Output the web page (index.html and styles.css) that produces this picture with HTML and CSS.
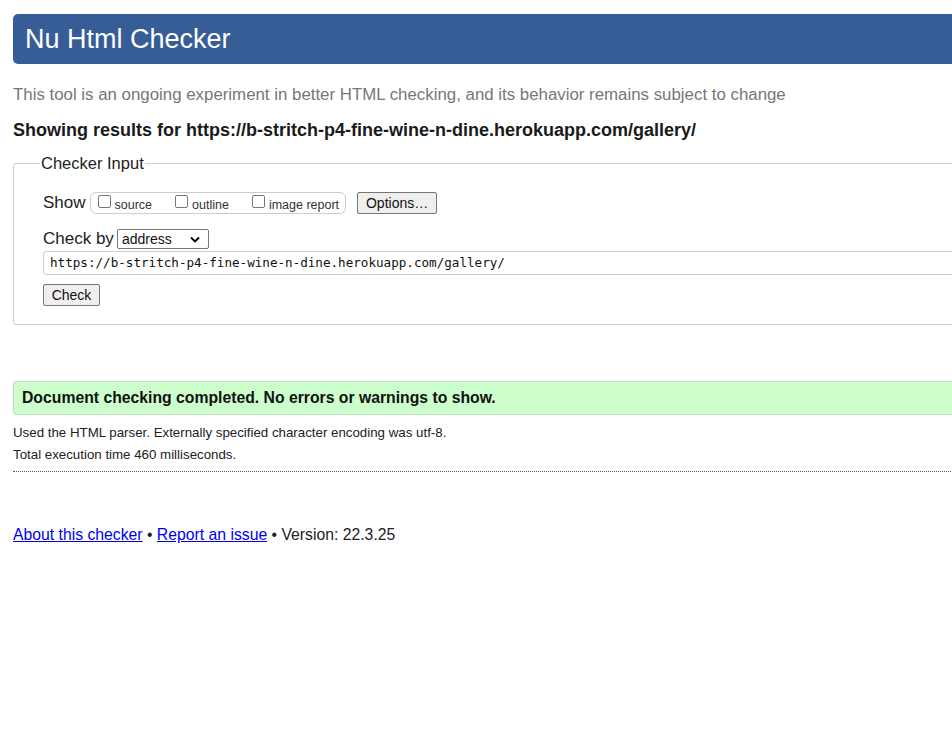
FILE: index.html
```html
<!DOCTYPE html>
<html>
<head>
<meta charset="utf-8">
<title>Nu Html Checker</title>
<link rel="stylesheet" href="styles.css">
</head>
<body>
<div class="page">
  <h1 class="title">Nu Html Checker</h1>
  <p class="tagline">This tool is an ongoing experiment in better HTML checking, and its behavior remains subject to change</p>
  <p class="showing">Showing results for https://b-stritch-p4-fine-wine-n-dine.herokuapp.com/gallery/</p>
  <fieldset class="input-box">
    <legend class="legend">Checker Input</legend>
    <div class="row show-row">
      <span class="lbl">Show</span>
      <span class="opts">
        <label class="opt"><span class="cb"></span>source</label>
        <label class="opt"><span class="cb"></span>outline</label>
        <label class="opt"><span class="cb"></span>image report</label>
      </span>
      <span class="btn options-btn">Options…</span>
    </div>
    <div class="row by-row">
      <span class="lbl">Check by</span>
      <span class="select">address<svg class="chev" width="10" height="7" viewBox="0 0 10 7"><path d="M1 1.5 L5 5.5 L9 1.5" fill="none" stroke="#000" stroke-width="1.8"/></svg></span>
    </div>
    <div class="url">https://b-stritch-p4-fine-wine-n-dine.herokuapp.com/gallery/</div>
    <span class="btn check-btn">Check</span>
  </fieldset>
  <div class="success">Document checking completed. No errors or warnings to show.</div>
  <p class="details">Used the HTML parser. Externally specified character encoding was utf-8.</p>
  <p class="details">Total execution time 460 milliseconds.</p>
  <div class="rule"></div>
  <p class="footer"><a href="#">About this checker</a> • <a href="#">Report an issue</a> • Version: 22.3.25</p>
</div>
</body>
</html>
```
FILE: styles.css
```css
html { overflow: hidden; }
body {
  margin: 0;
  background: #fff;
  font-family: "Liberation Sans", Arial, sans-serif;
  color: #222;
}
.page {
  width: 1100px;
  padding: 14px 0 0 13px;
}
.title {
  margin: 0;
  height: 50px;
  box-sizing: border-box;
  background: #365d95;
  color: #fff;
  border-radius: 5px 0 0 5px;
  font-weight: normal;
  font-size: 27px;
  line-height: 50px;
  padding-left: 12px;
}
.tagline {
  margin: 20px 0 0;
  color: #777;
  font-size: 16.85px;
  line-height: 22px;
}
.showing {
  margin: 13px 0 0;
  font-weight: bold;
  font-size: 18px;
  line-height: 22px;
  color: #1a1a1a;
}
.input-box {
  margin: 13px 0 0;
  border: 1px solid #ccc;
  border-right: none;
  border-radius: 4px 0 0 4px;
  padding: 4px 0 18px 29px;
  min-width: 0;
}
.legend {
  font-size: 16.5px;
  padding: 0 1px;
  margin-left: -3px;
  color: #222;
}
.row {
  display: flex;
  align-items: center;
}
.show-row {
  margin-top: 15px;
  height: 22px;
}
.lbl {
  font-size: 17px;
  color: #222;
  white-space: nowrap;
}
.opts {
  display: flex;
  align-items: center;
  flex-shrink: 0;
  margin-left: 4px;
  height: 20px;
  border: 1px solid #ccc;
  border-radius: 6px;
  padding: 0 6px 0 6px;
  white-space: nowrap;
}
.opt {
  display: flex;
  align-items: center;
  font-size: 12.5px;
  color: #333;
  margin-right: 22px;
  padding-top: 3px;
  white-space: nowrap;
}
.opt:last-child { margin-right: 0; }
.cb {
  flex-shrink: 0;
  width: 11px;
  height: 11px;
  border: 1px solid #767676;
  border-radius: 2px;
  margin: -7px 4px 0 1px;
  background: #fff;
}
.btn {
  display: inline-flex;
  align-items: center;
  justify-content: center;
  box-sizing: border-box;
  border: 1px solid #767676;
  border-radius: 2px;
  background: #efefef;
  font-size: 14px;
  color: #111;
  white-space: nowrap;
  flex-shrink: 0;
}
.options-btn {
  margin-left: 11px;
  width: 80px;
  height: 22px;
}
.by-row {
  margin-top: 15px;
  height: 20px;
}
.select {
  display: inline-flex;
  align-items: center;
  justify-content: space-between;
  box-sizing: border-box;
  margin-left: 3px;
  width: 92px;
  height: 20px;
  border: 1px solid #767676;
  border-radius: 2px;
  padding: 0 8px 0 4px;
  font-size: 14px;
  color: #111;
}
.url {
  margin-top: 2px;
  height: 24px;
  box-sizing: border-box;
  border: 1px solid #ccc;
  border-right: none;
  border-radius: 4px 0 0 4px;
  padding-left: 6px;
  font-family: "DejaVu Sans Mono", "Liberation Mono", monospace;
  font-size: 12.6px;
  line-height: 22px;
  color: #111;
}
.check-btn {
  margin-top: 9px;
  width: 57px;
  height: 22px;
}
.success {
  margin-top: 56px;
  height: 34px;
  box-sizing: border-box;
  background: #ccffcc;
  border: 1px solid #c4d8c4;
  border-right: none;
  border-radius: 4px 0 0 4px;
  padding-left: 8px;
  font-weight: bold;
  font-size: 15.75px;
  line-height: 31px;
  color: #111;
}
.details {
  margin: 0;
  font-size: 13.3px;
  line-height: 22px;
  color: #222;
}
.success + .details { margin-top: 7px; }
.rule {
  margin-top: 5px;
  border-top: 1px dotted #555;
}
.footer {
  margin: 54px 0 0;
  font-size: 15.75px;
  color: #222;
}
.footer a { color: #0000ee; }
```
